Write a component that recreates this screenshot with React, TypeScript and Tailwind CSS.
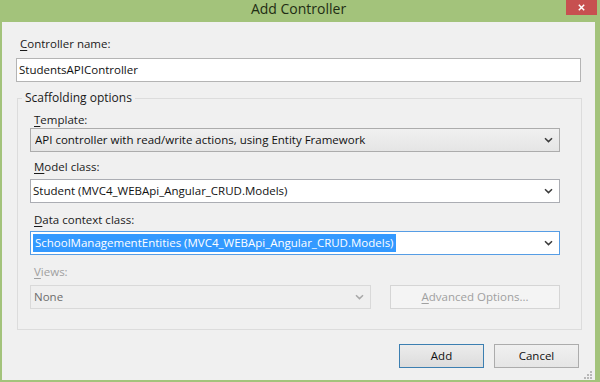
import React from "react";

function Chevron({ color = "#3c3c3c" }: { color?: string }) {
  return (
    <svg width="9" height="6" viewBox="0 0 9 6" className="shrink-0">
      <path d="M1 1.2l3.5 3.4L8 1.2" fill="none" stroke={color} strokeWidth="1.5" />
    </svg>
  );
}

function Label({ k, rest, disabled = false, cls = "" }: { k: string; rest: string; disabled?: boolean; cls?: string }) {
  return (
    <div className={`h-[16px] leading-[16px] ${disabled ? "text-[#a0a0a0]" : "text-[#1a1a1a]"} ${cls}`}>
      <span className="underline underline-offset-[2px] decoration-[1px]">{k}</span>
      {rest}
    </div>
  );
}

export default function App() {
  return (
    <div className="w-[600px] h-[382px] bg-[#a3c37b] flex flex-col font-['Open_Sans',sans-serif] text-[11.5px] overflow-hidden">
      {/* Title bar */}
      <div className="h-[22px] flex items-start shrink-0">
        <div className="flex-1" />
        <div className="text-[14px] leading-[18px] text-[#1f2d14]">Add Controller</div>
        <div className="flex-1 flex justify-end pr-[3px]">
          <div className="w-[31px] h-[15px] bg-[#c75050] flex items-center justify-center">
            <svg width="7" height="7" viewBox="0 0 7 7">
              <path d="M0.8 0.8L6.2 6.2M6.2 0.8L0.8 6.2" stroke="#ffffff" strokeWidth="1.5" />
            </svg>
          </div>
        </div>
      </div>

      {/* Body */}
      <div className="flex-1 flex pl-[2px] pr-[5px] pb-[2px]">
        <div className="flex-1 bg-[#f0f0f0] flex flex-col px-[14px] pt-[14px]">
          <div className="pl-[4px]">
            <Label k="C" rest="ontroller name:" />
          </div>
          <div className="mt-[6px] h-[24px] border border-[#b4b4b4] bg-white flex items-center pl-[2px] text-[#111]">
            StudentsAPIController
          </div>

          <fieldset className="mt-[8px] ml-[1px] mr-[-1px] border border-[#dcdcdc] pl-[12px] pr-[21px] pt-[6px] pb-[20px]">
            <legend className="ml-[-8px] px-[3px] h-[16px] leading-[16px] text-[12px] text-[#1a1a1a]">Scaffolding options</legend>

            <Label k="T" rest="emplate:" cls="pl-[4px]" />
            <div className="h-[24px] border border-[#acacac] bg-gradient-to-b from-[#f0f0f0] to-[#e5e5e5] flex items-center pl-[4px] pr-[6px] text-[#111]">
              <span className="flex-1 truncate">API controller with read/write actions, using Entity Framework</span>
              <Chevron />
            </div>

            <Label k="M" rest="odel class:" cls="mt-[7px] pl-[4px]" />
            <div className="mt-[4px] h-[24px] border border-[#abadb3] bg-white flex items-center pl-[2px] pr-[6px] text-[#111]">
              <span className="flex-1 truncate">Student (MVC4_WEBApi_Angular_CRUD.Models)</span>
              <Chevron />
            </div>

            <Label k="D" rest="ata context class:" cls="mt-[9px] pl-[4px]" />
            <div className="mt-[3px] h-[24px] border border-[#569de5] bg-white flex items-center pl-[2px] pr-[6px]">
              <span className="flex-1 flex">
                <span className="bg-[#3399ff] text-white leading-[18px] px-[2px]">SchoolManagementEntities (MVC4_WEBApi_Angular_CRUD.Models)</span>
              </span>
              <Chevron />
            </div>

            <Label k="V" rest="iews:" disabled cls="mt-[9px] pl-[4px]" />
            <div className="mt-[5px] flex gap-[19px]">
              <div className="w-[341px] h-[24px] border border-[#d9d9d9] bg-[#efefef] flex items-center pl-[3px] pr-[6px] text-[#6d6d6d]">
                <span className="flex-1">None</span>
                <Chevron color="#a8a8a8" />
              </div>
              <div className="flex-1 h-[24px] border border-[#d5d5d5] bg-[#f4f4f4] flex items-center justify-center text-[#a0a0a0]">
                <span>
                  <span className="underline underline-offset-[2px]">A</span>dvanced Options...
                </span>
              </div>
            </div>
          </fieldset>

          <div className="mt-[14px] flex justify-end gap-[10px] pr-[2px]">
            <div className="w-[85px] h-[24px] border border-[#3c7fb1] bg-gradient-to-b from-[#ececec] to-[#dcdcdc] flex items-center justify-center text-[#111]">
              Add
            </div>
            <div className="w-[85px] h-[24px] border border-[#acacac] bg-gradient-to-b from-[#f0f0f0] to-[#e5e5e5] flex items-center justify-center text-[#111]">
              Cancel
            </div>
          </div>
          <div className="mt-[3px] flex justify-end mr-[-11px]">
            <svg width="8" height="8" viewBox="0 0 8 8">
              <g fill="#b8b8b8">
                <rect x="6" y="0" width="2" height="2" />
                <rect x="3" y="3" width="2" height="2" />
                <rect x="6" y="3" width="2" height="2" />
                <rect x="0" y="6" width="2" height="2" />
                <rect x="3" y="6" width="2" height="2" />
                <rect x="6" y="6" width="2" height="2" />
              </g>
            </svg>
          </div>
        </div>
      </div>
    </div>
  );
}
